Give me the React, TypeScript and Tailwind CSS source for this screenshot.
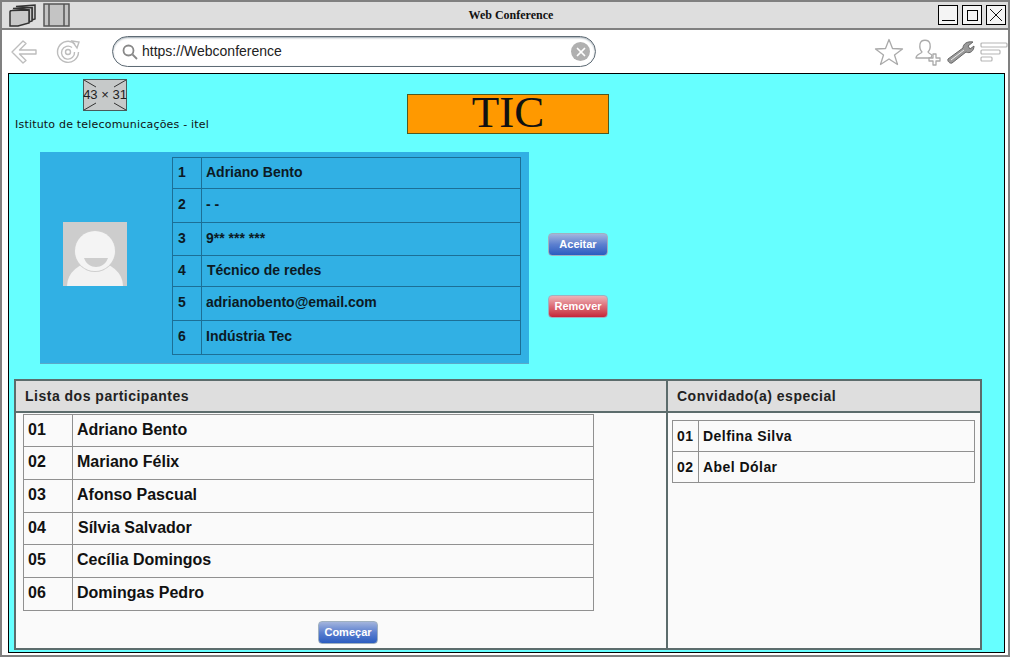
import { X } from "lucide-react"

const profile = [
	{ n: "1", text: "Adriano Bento", h: "h-[31px]", cell: "pb-[1px]", pad: "pl-[4px]" },
	{ n: "2", text: "- -", h: "h-[34px]", cell: "pb-[2px]", pad: "pl-[4px]" },
	{ n: "3", text: "9** *** ***", h: "h-[33px]", cell: "pb-[1px]", pad: "pl-[4px]" },
	{ n: "4", text: "Técnico de redes", h: "h-[31px]", cell: "pb-[1px]", pad: "pl-[5px]" },
	{ n: "5", text: "adrianobento@email.com", h: "h-[34px]", cell: "pb-[2px]", pad: "pl-[4px]" },
	{ n: "6", text: "Indústria Tec", h: "h-[34px]", cell: "pb-[2px]", pad: "pl-[4px]" },
]

const participants = [
	{ n: "01", name: "Adriano Bento", h: "h-[32px]", pad: "pl-[4px]" },
	{ n: "02", name: "Mariano Félix", h: "h-[33px]", pad: "pl-[4px]" },
	{ n: "03", name: "Afonso Pascual", h: "h-[33px]", pad: "pl-[4px]" },
	{ n: "04", name: "Sílvia Salvador", h: "h-[32px]", pad: "pl-[5px]" },
	{ n: "05", name: "Cecília Domingos", h: "h-[33px]", pad: "pl-[4px]" },
	{ n: "06", name: "Domingas Pedro", h: "h-[33px]", pad: "pl-[4px]" },
]

const guests = [
	{ n: "01", name: "Delfina Silva" },
	{ n: "02", name: "Abel Dólar" },
]

function WindowButton({ children }: { children: React.ReactNode }) {
	return (
		<div className="w-[20px] h-[20px] border border-black bg-[#f4f4f4] flex items-center justify-center">
			{children}
		</div>
	)
}

function TitleBar() {
	return (
		<div className="h-[28px] shrink-0 bg-[#dedede] border-b-2 border-[#808080] flex items-center relative">
			<div className="flex items-center pl-[6px] gap-[7px]">
				<svg width="28" height="24" viewBox="0 0 28 24" fill="#c8c8c8" stroke="#333" strokeWidth="1.5">
					<path d="M8 3.5 L27 2 V16 L24 17 V5 Z" />
					<path d="M5 5.5 L24 4.5 V18 L21 19 V7 Z" />
					<path d="M2 9 Q2 7.5 4 7.5 L21 7 V20 L10 23 H2 Z" />
				</svg>
				<svg width="27" height="24" viewBox="0 0 27 24" fill="#c4c4c4" stroke="#555" strokeWidth="1.5">
					<rect x="1" y="1" width="25" height="22" />
					<path d="M6 1 V23 M21 1 V23" />
				</svg>
			</div>
			<div className="absolute left-0 right-0 pl-[12px] text-center font-['Liberation_Serif',serif] font-bold text-[12px] leading-none text-[#111]">
				Web Conference
			</div>
			<div className="ml-auto flex items-center gap-[4px] pr-[2px]">
				<WindowButton>
					<div className="w-[13px] h-[1px] bg-black mt-[10px]" />
				</WindowButton>
				<WindowButton>
					<div className="w-[11px] h-[11px] border border-black" />
				</WindowButton>
				<WindowButton>
					<svg width="16" height="16" viewBox="0 0 16 16" stroke="#111" strokeWidth="1">
						<path d="M2 2 L14 14 M14 2 L2 14" />
					</svg>
				</WindowButton>
			</div>
		</div>
	)
}

function Toolbar() {
	return (
		<div className="h-[43px] shrink-0 bg-white flex items-center">
			<svg className="ml-[8px]" width="28" height="26" viewBox="0 0 28 26" fill="none" stroke="#bdbdbd" strokeWidth="1.4" strokeLinejoin="round">
				<path d="M2 13 L13 2 L16 4.5 L9.5 11 H26 V15 H9.5 L16 21.5 L13 24 Z" />
			</svg>
			<svg className="ml-[17px]" width="26" height="26" viewBox="0 0 26 26" fill="none" stroke="#bdbdbd" strokeWidth="1.4">
				<path d="M20 5 A10.5 10.5 0 1 0 23.5 13" />
				<path d="M17 8.5 A6.5 6.5 0 1 0 19.5 13" />
				<circle cx="13" cy="13" r="2.5" />
				<path d="M17 2 L24 3 L22 9 Z" />
			</svg>
			<div className="ml-[31px] w-[484px] h-[31px] rounded-[16px] border border-[#5e6b75] shadow-[inset_0_1px_2px_#9aa5ad] flex items-center pl-[9px] pr-[5px]">
				<svg width="16" height="16" viewBox="0 0 16 16" fill="none" stroke="#888" strokeWidth="1.8">
					<circle cx="6.5" cy="6.5" r="5" />
					<path d="M10.5 10.5 L15 15" />
				</svg>
				<span className="ml-[4px] font-['Liberation_Sans',sans-serif] text-[14px] text-[#222]">https://Webconference</span>
				<div className="ml-auto w-[19px] h-[19px] rounded-full bg-[#b0b0b0] flex items-center justify-center">
					<X size={14} color="#fff" strokeWidth={3} />
				</div>
			</div>
			<div className="ml-auto flex items-center">
				<svg width="30" height="28" viewBox="0 0 30 28" fill="none" stroke="#aaa" strokeWidth="1.3" strokeLinejoin="round">
					<path d="M15 1.5 L18.5 10.5 L28.5 11 L20.5 17 L23.5 26.5 L15 21 L6.5 26.5 L9.5 17 L1.5 11 L11.5 10.5 Z" />
				</svg>
				<svg className="ml-[11px]" width="27" height="28" viewBox="0 0 27 28" fill="none" stroke="#aaa" strokeWidth="1.3" strokeLinejoin="round">
					<path d="M1 20 C1 16 6 16 7 14 C5 12 4.5 9 5 6 C6 1 14 1 15 6 C15.5 9 15 12 13 14 C14 15.5 15.5 16 17 17 L16 20 Z" />
					<path d="M18 16 H21 V20 H25 V23 H21 V27 H18 V23 H14 V20 H18 Z" fill="#fff" />
				</svg>
				<svg className="ml-[5px]" width="28" height="24" viewBox="0 0 28 24" fill="#777" stroke="#666" strokeWidth="1">
					<path d="M1 19 L16 8 C16 4 20 1 26 2 L21 6 L23 9 L27 6 C27 11 23 14 19 12 L5 23 C3 24 0 21 1 19 Z" fill="#9a9a9a" />
					<path d="M4 20 L17 10" stroke="#eee" />
				</svg>
				<svg className="ml-[5px]" width="28" height="20" viewBox="0 0 28 20" fill="#fff" stroke="#b5b5b5" strokeWidth="1.2">
					<rect x="1" y="1" width="26" height="4" rx="1" />
					<rect x="1" y="8" width="19" height="4" rx="1" />
					<rect x="1" y="15" width="11" height="4" rx="1" />
				</svg>
			</div>
		</div>
	)
}

function GlossButton({ label, tone }: { label: string; tone: "blue" | "red" }) {
	const toneClass =
		tone === "blue"
			? "bg-gradient-to-b from-[#a3b4dc] via-[#5c7fcf] to-[#2a5cc0]"
			: "bg-gradient-to-b from-[#eab3b8] via-[#dc6a75] to-[#c4243a]"
	return (
		<div
			className={`w-[60px] h-[23px] rounded-[4px] border border-[#9fb0c0] flex items-center justify-center font-['Liberation_Sans',sans-serif] font-bold text-[11px] text-white ${toneClass}`}
		>
			{label}
		</div>
	)
}

function Avatar() {
	return (
		<svg width="64" height="64" viewBox="0 0 64 64" className="shrink-0">
			<rect width="64" height="64" fill="#cdcdcd" />
			<ellipse cx="32" cy="64" rx="28" ry="24" fill="#f2f2f2" />
			<circle cx="32" cy="29" r="21" fill="#cfcfcf" />
			<circle cx="32" cy="29" r="20" fill="#f4f4f4" />
			<path d="M21 36 H45 C41 48 25 48 21 36 Z" fill="#cdcdcd" />
		</svg>
	)
}

function ProfileTable() {
	return (
		<div className="w-[349px] border-t border-l border-[#1c6f96] font-['Liberation_Sans',sans-serif] font-bold text-[14px] text-[#0c1a24]">
			{profile.map((row) => (
				<div key={row.n} className={`flex border-b border-r border-[#1c6f96] ${row.h}`}>
					<div className={`w-[29px] border-r border-[#1c6f96] pl-[5px] flex items-center ${row.cell}`}>{row.n}</div>
					<div className={`flex items-center ${row.pad} ${row.cell}`}>{row.text}</div>
				</div>
			))}
		</div>
	)
}

function App() {
	return (
		<div className="w-[1010px] h-[657px] overflow-hidden bg-white border-2 border-[#808080] flex flex-col">
			<TitleBar />
			<Toolbar />
			<div className="ml-[6px] mr-[3px] h-[580px] shrink-0 border border-black bg-[#66ffff] flex flex-col pl-[5px]">
				<div className="h-[78px] shrink-0 flex">
					<div className="w-[393px] flex flex-col items-start">
						<div className="mt-[5px] ml-[69px] w-[44px] h-[32px] pb-[1px] bg-[#c6c9c9] border border-[#4a5a5a] relative flex items-center justify-center">
							<svg className="absolute inset-0" width="42" height="30" viewBox="0 0 42 30" stroke="#333" strokeWidth="1">
								<path d="M0 0 L12 7 M42 0 L30 7 M0 30 L12 23 M42 30 L30 23" />
							</svg>
							<span className="relative font-['Liberation_Sans',sans-serif] text-[13px] text-[#222] leading-none whitespace-nowrap">43 × 31</span>
						</div>
						<div className="mt-[8px] ml-[1px] font-['DejaVu_Sans',sans-serif] text-[11px] tracking-[0.2px] text-[#111] leading-none whitespace-nowrap">
							Istituto de telecomunicações - itel
						</div>
					</div>
					<div className="mt-[20px] w-[202px] h-[40px] pb-[3px] bg-[#ff9900] border border-[#4f5a20] flex items-center justify-center font-['Liberation_Serif',serif] text-[45px] leading-none text-[#111]">
						TIC
					</div>
				</div>
				<div className="flex ml-[26px] h-[212px] shrink-0">
					<div className="w-[489px] h-[212px] bg-[#31b0e4] border-b border-[#5aa9c9] flex pt-[5px] pl-[23px]">
						<div className="mt-[65px]">
							<Avatar />
						</div>
						<div className="ml-[45px]">
							<ProfileTable />
						</div>
					</div>
					<div className="ml-[19px] pt-[81px] flex flex-col gap-[39px]">
						<GlossButton label="Aceitar" tone="blue" />
						<GlossButton label="Remover" tone="red" />
					</div>
				</div>
				<div className="mt-[15px] w-[968px] h-[271px] border-2 border-[#5c6c6c] bg-[#fafafa] flex font-['Liberation_Sans',sans-serif] font-bold">
					<div className="w-[652px] border-r-2 border-[#5c6c6c] flex flex-col">
						<div className="h-[32px] shrink-0 bg-[#dedede] border-b-2 border-[#5c6c6c] pl-[9px] flex items-center text-[14px] text-[#222] tracking-[0.5px]">
							Lista dos participantes
						</div>
						<div className="ml-[7px] mt-[1px] w-[571px] border-t border-l border-[#909090] text-[16px] text-[#111]">
							{participants.map((p) => (
								<div key={p.n} className={`flex border-b border-r border-[#909090] ${p.h}`}>
									<div className="w-[49px] border-r border-[#909090] pl-[4px] pb-[2px] flex items-center">{p.n}</div>
									<div className={`pb-[2px] flex items-center ${p.pad}`}>{p.name}</div>
								</div>
							))}
						</div>
						<div className="mt-[10px] flex justify-center ml-[14px]">
							<GlossButton label="Começar" tone="blue" />
						</div>
					</div>
					<div className="flex-1 flex flex-col">
						<div className="h-[32px] shrink-0 bg-[#dedede] border-b-2 border-[#5c6c6c] pl-[9px] flex items-center text-[14px] text-[#222] tracking-[0.5px]">
							Convidado(a) especial
						</div>
						<div className="ml-[4px] mt-[7px] w-[303px] border-t border-l border-[#909090] text-[14px] text-[#111] tracking-[0.45px]">
							{guests.map((g) => (
								<div key={g.n} className="flex h-[31px] border-b border-r border-[#909090]">
									<div className="w-[26px] border-r border-[#909090] pl-[4px] flex items-center">{g.n}</div>
									<div className="pl-[4px] flex items-center">{g.name}</div>
								</div>
							))}
						</div>
					</div>
				</div>
			</div>
		</div>
	)
}

export default App
